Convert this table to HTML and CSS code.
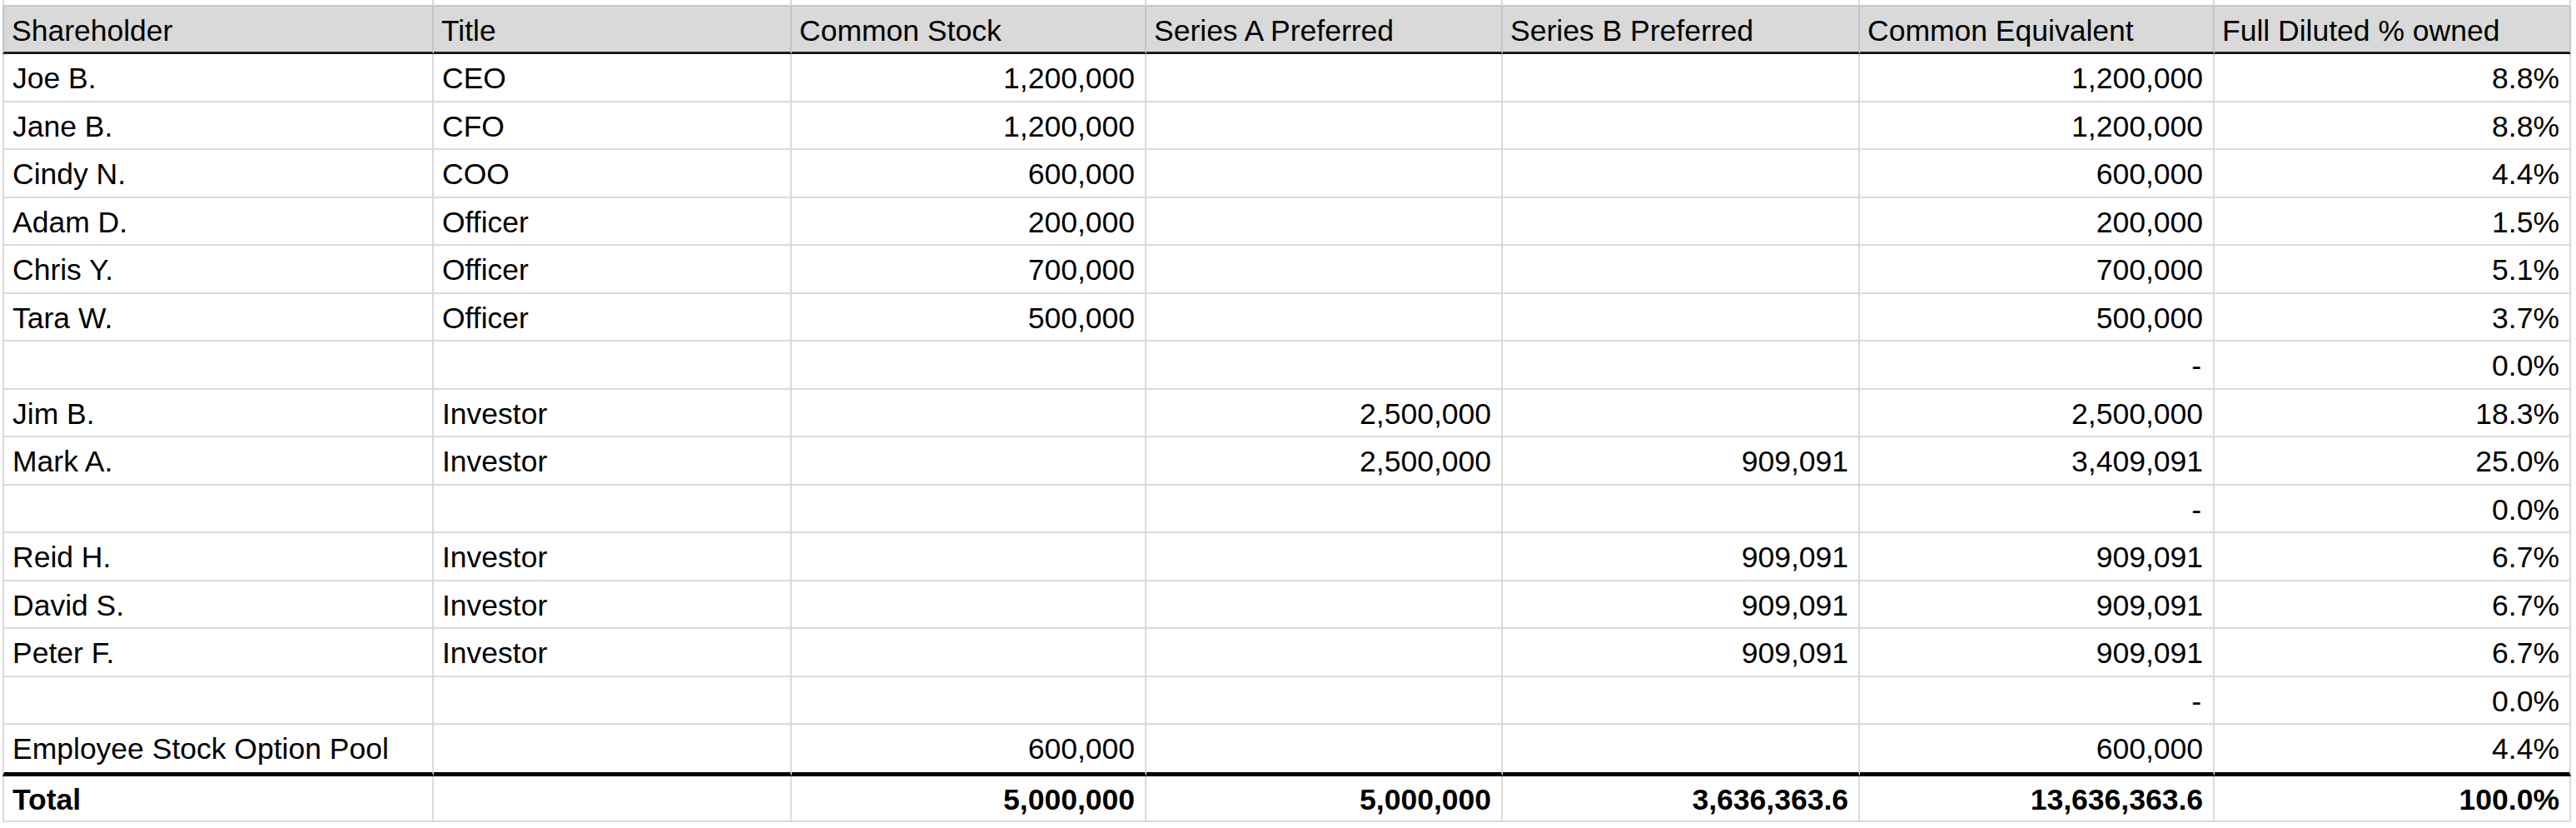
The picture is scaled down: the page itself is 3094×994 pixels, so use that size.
FILE: index.html
```html
<!DOCTYPE html>
<html>
<head>
<meta charset="utf-8">
<title>Cap Table</title>
<link rel="stylesheet" href="styles.css">
</head>
<body>
<div class="sheet">
  <div class="row stub"><div class="c"></div><div class="c"></div><div class="c"></div><div class="c"></div><div class="c"></div><div class="c"></div><div class="c"></div></div>
  <div class="row head">
    <div class="c">Shareholder</div><div class="c">Title</div><div class="c">Common Stock</div><div class="c">Series A Preferred</div><div class="c">Series B Preferred</div><div class="c">Common Equivalent</div><div class="c">Full Diluted % owned</div>
  </div>
  <div class="row"><div class="c">Joe B.</div><div class="c">CEO</div><div class="c n">1,200,000</div><div class="c n"></div><div class="c n"></div><div class="c n">1,200,000</div><div class="c n">8.8%</div></div>
  <div class="row"><div class="c">Jane B.</div><div class="c">CFO</div><div class="c n">1,200,000</div><div class="c n"></div><div class="c n"></div><div class="c n">1,200,000</div><div class="c n">8.8%</div></div>
  <div class="row"><div class="c">Cindy N.</div><div class="c">COO</div><div class="c n">600,000</div><div class="c n"></div><div class="c n"></div><div class="c n">600,000</div><div class="c n">4.4%</div></div>
  <div class="row"><div class="c">Adam D.</div><div class="c">Officer</div><div class="c n">200,000</div><div class="c n"></div><div class="c n"></div><div class="c n">200,000</div><div class="c n">1.5%</div></div>
  <div class="row"><div class="c">Chris Y.</div><div class="c">Officer</div><div class="c n">700,000</div><div class="c n"></div><div class="c n"></div><div class="c n">700,000</div><div class="c n">5.1%</div></div>
  <div class="row"><div class="c">Tara W.</div><div class="c">Officer</div><div class="c n">500,000</div><div class="c n"></div><div class="c n"></div><div class="c n">500,000</div><div class="c n">3.7%</div></div>
  <div class="row"><div class="c"></div><div class="c"></div><div class="c n"></div><div class="c n"></div><div class="c n"></div><div class="c n dash">-</div><div class="c n">0.0%</div></div>
  <div class="row"><div class="c">Jim B.</div><div class="c">Investor</div><div class="c n"></div><div class="c n">2,500,000</div><div class="c n"></div><div class="c n">2,500,000</div><div class="c n">18.3%</div></div>
  <div class="row"><div class="c">Mark A.</div><div class="c">Investor</div><div class="c n"></div><div class="c n">2,500,000</div><div class="c n">909,091</div><div class="c n">3,409,091</div><div class="c n">25.0%</div></div>
  <div class="row"><div class="c"></div><div class="c"></div><div class="c n"></div><div class="c n"></div><div class="c n"></div><div class="c n dash">-</div><div class="c n">0.0%</div></div>
  <div class="row"><div class="c">Reid H.</div><div class="c">Investor</div><div class="c n"></div><div class="c n"></div><div class="c n">909,091</div><div class="c n">909,091</div><div class="c n">6.7%</div></div>
  <div class="row"><div class="c">David S.</div><div class="c">Investor</div><div class="c n"></div><div class="c n"></div><div class="c n">909,091</div><div class="c n">909,091</div><div class="c n">6.7%</div></div>
  <div class="row"><div class="c">Peter F.</div><div class="c">Investor</div><div class="c n"></div><div class="c n"></div><div class="c n">909,091</div><div class="c n">909,091</div><div class="c n">6.7%</div></div>
  <div class="row"><div class="c"></div><div class="c"></div><div class="c n"></div><div class="c n"></div><div class="c n"></div><div class="c n dash">-</div><div class="c n">0.0%</div></div>
  <div class="row last"><div class="c">Employee Stock Option Pool</div><div class="c"></div><div class="c n">600,000</div><div class="c n"></div><div class="c n"></div><div class="c n">600,000</div><div class="c n">4.4%</div></div>
  <div class="row total"><div class="c">Total</div><div class="c"></div><div class="c n">5,000,000</div><div class="c n">5,000,000</div><div class="c n">3,636,363.6</div><div class="c n">13,636,363.6</div><div class="c n">100.0%</div></div>
</div>
</body>
</html>
```
FILE: styles.css
```css
html, body {
  margin: 0;
  padding: 0;
  background: #ffffff;
}

body {
  font-family: "Liberation Sans", Arial, Helvetica, sans-serif;
  font-size: 35.5px;
  color: #000000;
}

.sheet {
  margin-left: 3px;
  width: 3085px;
}

.row {
  display: grid;
  grid-template-columns: 518px 430px 426px 428px 429px 426px 428px;
  height: 57.5px;
}

.c {
  box-sizing: border-box;
  border-right: 2px solid #dadada;
  border-bottom: 2px solid #dadada;
  display: flex;
  align-items: center;
  padding: 4px 10px 0 10px;
  white-space: nowrap;
  overflow: hidden;
}

.c:first-child {
  border-left: 2px solid #dadada;
}

.n {
  justify-content: flex-end;
  padding-right: 12px;
}

.dash {
  padding-right: 14px;
}

.stub {
  height: 8px;
}

.stub .c {
  padding: 0;
  border-bottom-color: #c6c6c6;
}

.head {
  height: 57px;
}

.head .c {
  background: #d9d9d9;
  border-right-color: #c4c4c4;
  border-bottom: 3px solid #1e1e1e;
  padding-left: 9px;
}

.head .c:first-child {
  border-left-color: #c4c4c4;
}

.last {
  height: 62px;
}

.last .c {
  border-bottom: 5px solid #000000;
  padding-top: 2px;
}

.total {
  height: 55px;
}

.total .c {
  font-weight: bold;
}
```
